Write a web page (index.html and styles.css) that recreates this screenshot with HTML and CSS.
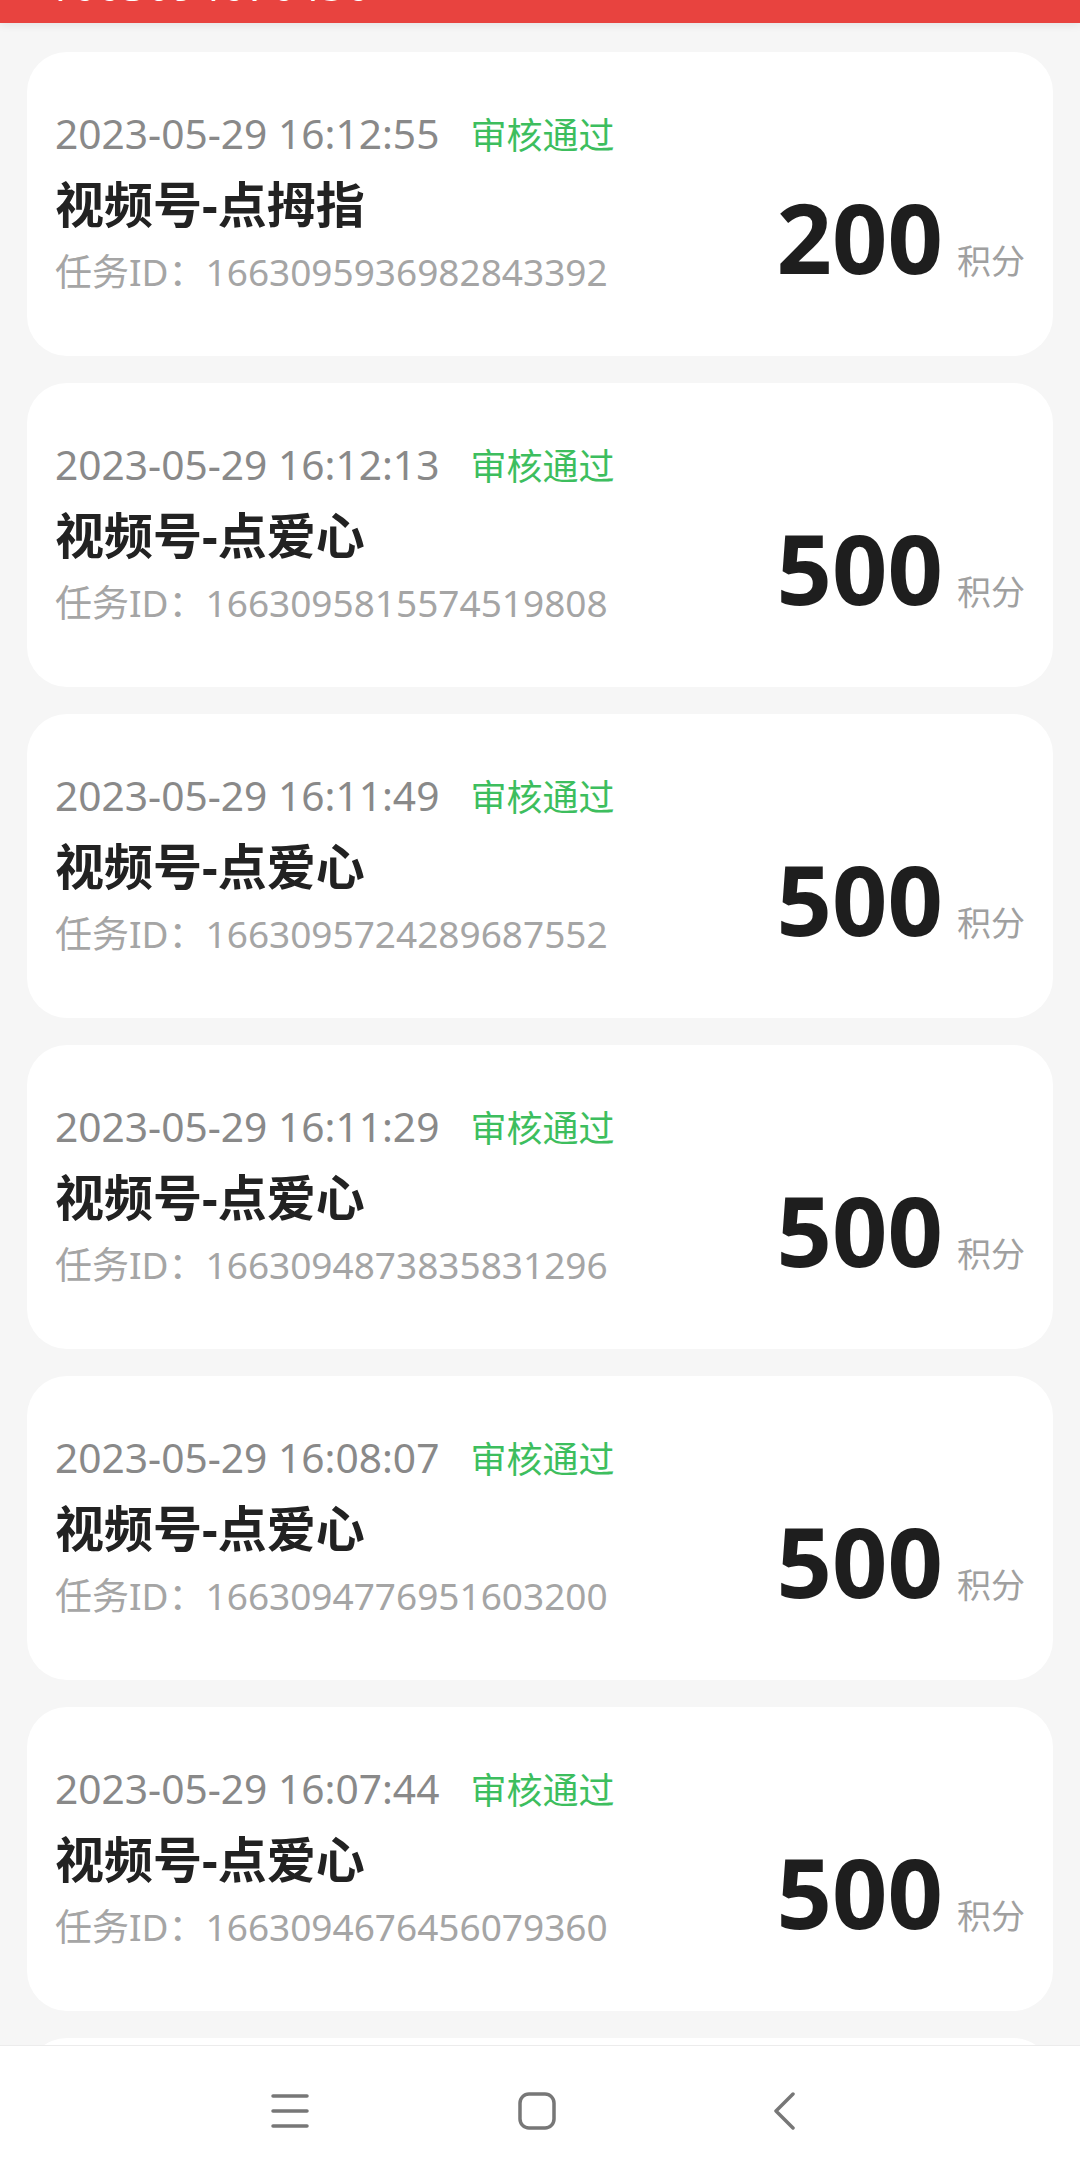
FILE: index.html
```html
<!DOCTYPE html>
<html lang="zh-CN">
<head>
  <meta charset="UTF-8">
  <meta name="viewport" content="width=device-width, initial-scale=1.0">
  <title>积分明细</title>
  <link rel="stylesheet" href="styles.css">
</head>
<body>
  <div class="header">
    <span class="header-title">1663094676456</span>
  </div>

  <div class="list">
    <div class="card">
      <div class="info">
        <div class="date">2023-05-29 16:12:55<span class="status">审核通过</span></div>
        <div class="title">视频号-点拇指</div>
        <div class="task-id">任务ID：1663095936982843392</div>
      </div>
      <div class="points"><span class="num">200</span><span class="unit">积分</span></div>
    </div>

    <div class="card">
      <div class="info">
        <div class="date">2023-05-29 16:12:13<span class="status">审核通过</span></div>
        <div class="title">视频号-点爱心</div>
        <div class="task-id">任务ID：1663095815574519808</div>
      </div>
      <div class="points"><span class="num">500</span><span class="unit">积分</span></div>
    </div>

    <div class="card">
      <div class="info">
        <div class="date">2023-05-29 16:11:49<span class="status">审核通过</span></div>
        <div class="title">视频号-点爱心</div>
        <div class="task-id">任务ID：1663095724289687552</div>
      </div>
      <div class="points"><span class="num">500</span><span class="unit">积分</span></div>
    </div>

    <div class="card">
      <div class="info">
        <div class="date">2023-05-29 16:11:29<span class="status">审核通过</span></div>
        <div class="title">视频号-点爱心</div>
        <div class="task-id">任务ID：1663094873835831296</div>
      </div>
      <div class="points"><span class="num">500</span><span class="unit">积分</span></div>
    </div>

    <div class="card">
      <div class="info">
        <div class="date">2023-05-29 16:08:07<span class="status">审核通过</span></div>
        <div class="title">视频号-点爱心</div>
        <div class="task-id">任务ID：1663094776951603200</div>
      </div>
      <div class="points"><span class="num">500</span><span class="unit">积分</span></div>
    </div>

    <div class="card">
      <div class="info">
        <div class="date">2023-05-29 16:07:44<span class="status">审核通过</span></div>
        <div class="title">视频号-点爱心</div>
        <div class="task-id">任务ID：1663094676456079360</div>
      </div>
      <div class="points"><span class="num">500</span><span class="unit">积分</span></div>
    </div>

    <div class="card"></div>
  </div>

  <div class="navbar">
    <div class="nav-btn">
      <svg width="40" height="36" viewBox="0 0 40 36">
        <path d="M3 3h34M3 18h34M3 33h34" stroke="#777" stroke-width="3.5" stroke-linecap="round" fill="none"/>
      </svg>
    </div>
    <div class="nav-btn">
      <svg width="38" height="38" viewBox="0 0 38 38">
        <rect x="2" y="2" width="34" height="34" rx="9" stroke="#777" stroke-width="3.5" fill="none"/>
      </svg>
    </div>
    <div class="nav-btn">
      <svg width="22" height="38" viewBox="0 0 22 38">
        <path d="M20 2L3 19l17 17" stroke="#777" stroke-width="3.5" stroke-linecap="round" stroke-linejoin="round" fill="none"/>
      </svg>
    </div>
  </div>
</body>
</html>
```

FILE: styles.css
```css
* {
  box-sizing: border-box;
}
body {
  margin: 0;
  width: 1080px;
  height: 2175px;
  display: flex;
  flex-direction: column;
  background: #f6f6f6;
  font-family: "Noto Sans", "Noto Sans CJK SC", sans-serif;
  overflow: hidden;
}
.header {
  height: 23px;
  flex-shrink: 0;
  background: #e8433f;
  overflow: hidden;
  padding-left: 48px;
  box-shadow: 0 2px 8px rgba(0, 0, 0, 0.08);
  position: relative;
  z-index: 1;
}
.header-title {
  display: block;
  margin-top: -36px;
  font-size: 40px;
  line-height: 44px;
  color: #fff;
  letter-spacing: 2px;
}
.list {
  flex: 1;
  overflow: hidden;
  padding: 29px 27px 0;
  display: flex;
  flex-direction: column;
  gap: 27px;
}
.card {
  flex-shrink: 0;
  height: 304px;
  background: #fff;
  border-radius: 40px;
  padding: 0 28px;
  display: flex;
  align-items: center;
  justify-content: space-between;
}
.info {
  display: flex;
  flex-direction: column;
  padding-bottom: 6px;
}
.date {
  font-size: 40.7px;
  line-height: 56px;
  color: #898989;
}
.status {
  font-size: 36px;
  color: #3dbe5e;
  margin-left: 31px;
}
.title {
  margin-top: 6px;
  font-size: 49px;
  line-height: 68px;
  font-weight: bold;
  color: #222;
}
.task-id {
  margin-top: 9px;
  font-size: 37px;
  line-height: 50px;
  color: #a5a5a5;
}
.points {
  align-self: flex-end;
  margin-bottom: 72px;
  display: flex;
  align-items: baseline;
  gap: 14px;
}
.num {
  font-size: 97px;
  line-height: 96px;
  font-weight: bold;
  color: #1e1e1e;
}
.unit {
  font-size: 34px;
  color: #a0a0a0;
}
.navbar {
  height: 130px;
  flex-shrink: 0;
  background: #fff;
  border-top: 1px solid #ececec;
  display: grid;
  grid-template-columns: repeat(3, 80px);
  column-gap: 167px;
  justify-content: center;
  align-items: center;
  margin-left: -6px;
}
.nav-btn {
  display: flex;
  justify-content: center;
  align-items: center;
}
```
